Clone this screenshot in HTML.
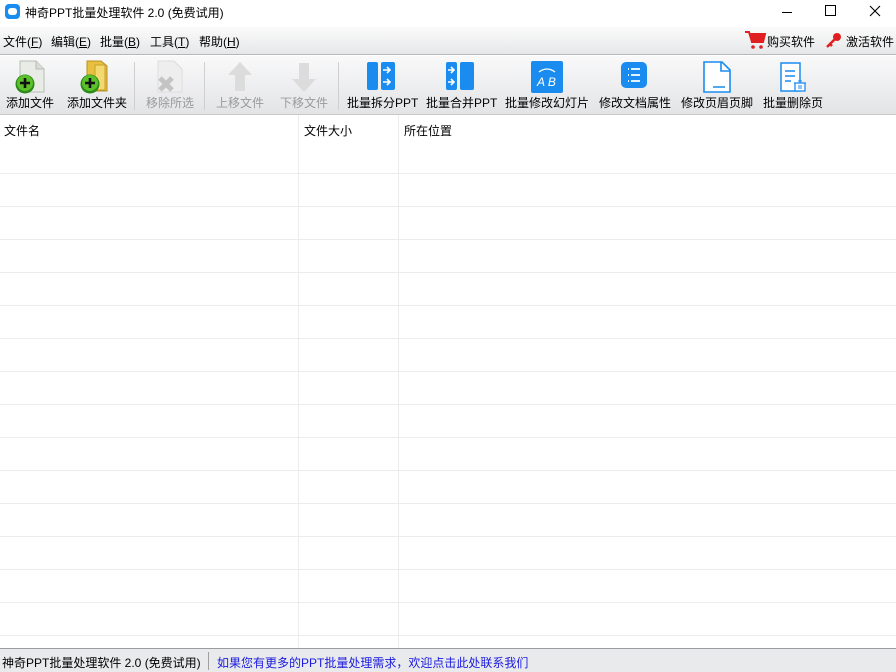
<!DOCTYPE html>
<html><head><meta charset="utf-8"><style>
*{margin:0;padding:0;box-sizing:border-box}
body{width:896px;height:672px;overflow:hidden;background:#fff;font-family:"Liberation Sans","Noto Sans CJK SC",sans-serif;font-size:12px;color:#000;position:relative}
.abs{position:absolute}
#title{top:0;left:0;width:896px;height:27px;background:#fff}
#menu{top:27px;left:0;width:896px;height:28px;background:linear-gradient(#fbfbfb,#e6e7e9);border-bottom:1px solid #b8b8b8}
#tool{top:56px;left:0;width:896px;height:59px;background:linear-gradient(#f9f9fa,#e3e4e6);border-bottom:1px solid #c8c8c8}
.mi{top:6px;font-size:12px}
.tb{position:absolute;top:38px;font-size:12px;white-space:nowrap}
.gray{color:#9a9a9a}
.sep{position:absolute;top:6px;width:1px;height:48px;background:#cfcfcf}
.hl{position:absolute;left:0;width:896px;height:1px;background:#ececec}
.vl{position:absolute;top:115px;width:1px;height:533px;background:#ececec}
#status{top:648px;left:0;width:896px;height:24px;background:#e9eaec;border-top:1px solid #9a9ca0}
</style></head><body>
<div id="title" class="abs">
 <div class="abs" style="left:5px;top:4px;width:15px;height:15px;border-radius:4px;background:#1a8cf0"><div class="abs" style="left:3px;top:4px;width:9px;height:7px;border-radius:3px;background:#fff"></div></div>
 <div class="abs" style="left:25px;top:4px;font-size:12px">神奇PPT批量处理软件 2.0 (免费试用)</div>
 <div class="abs" style="left:782px;top:12px;width:10px;height:1px;background:#000"></div>
 <div class="abs" style="left:825px;top:5px;width:11px;height:11px;border:1px solid #000"></div>
 <svg class="abs" style="left:869px;top:5px" width="12" height="12"><path d="M1 1L11 11M11 1L1 11" stroke="#000" stroke-width="1.1"/></svg>
</div>
<div id="menu" class="abs">
 <span class="abs mi" style="left:3px">文件(<u>F</u>)</span>
 <span class="abs mi" style="left:51px">编辑(<u>E</u>)</span>
 <span class="abs mi" style="left:100px">批量(<u>B</u>)</span>
 <span class="abs mi" style="left:150px">工具(<u>T</u>)</span>
 <span class="abs mi" style="left:199px">帮助(<u>H</u>)</span>
 <svg class="abs" style="left:744px;top:3px" width="22" height="20"><path d="M1 2h4l3 10h11l2-8H6" fill="none" stroke="#e02020" stroke-width="2"/><rect x="7" y="5" width="13" height="6" fill="#e02020"/><circle cx="9" cy="17" r="1.8" fill="#e02020"/><circle cx="17" cy="17" r="1.8" fill="#e02020"/></svg>
 <span class="abs mi" style="left:767px">购买软件</span>
 <svg class="abs" style="left:825px;top:4px" width="18" height="18"><circle cx="12" cy="6" r="4" fill="#e02020"/><path d="M10 8L2 16M5 13l2 2" stroke="#e02020" stroke-width="2.5"/></svg>
 <span class="abs mi" style="left:846px">激活软件</span>
</div>
<div id="tool" class="abs">
 <svg class="abs" style="left:14px;top:3px" width="34" height="36"><path d="M6 2h16l8 8v23H6z" fill="#e8ebe6" stroke="#b8bcb6"/><path d="M22 2v8h8" fill="#d8dcd6" stroke="#b8bcb6"/><circle cx="11" cy="25" r="9.5" fill="#2b8a1a"/><circle cx="11" cy="24" r="8" fill="#5cc02a"/><path d="M11 19v10M6 24h10" stroke="#111" stroke-width="2.6"/></svg>
 <span class="tb" style="left:6px">添加文件</span>
 <svg class="abs" style="left:79px;top:3px" width="34" height="36"><path d="M8 2h14l6 5v25H8z" fill="#e8c040" stroke="#b89020"/><path d="M16 6h10v25H16z" fill="#f4d870" stroke="#c8a030"/><circle cx="11" cy="25" r="9.5" fill="#2b8a1a"/><circle cx="11" cy="24" r="8" fill="#5cc02a"/><path d="M11 19v10M6 24h10" stroke="#111" stroke-width="2.6"/></svg>
 <span class="tb" style="left:67px">添加文件夹</span>
 <div class="sep" style="left:134px"></div>
 <svg class="abs" style="left:152px;top:3px" width="34" height="36"><path d="M6 2h16l8 8v23H6z" fill="#eee" stroke="#ddd"/><path d="M8 19l12 12M20 19L8 31" stroke="#c4c4c4" stroke-width="5"/></svg>
 <span class="tb gray" style="left:146px">移除所选</span>
 <div class="sep" style="left:204px"></div>
 <svg class="abs" style="left:226px;top:4px" width="28" height="34"><path d="M14 2L2 15h7v16h10V15h7z" fill="#dcdcdc"/></svg>
 <span class="tb gray" style="left:216px">上移文件</span>
 <svg class="abs" style="left:290px;top:4px" width="28" height="34"><path d="M14 32L2 19h7V3h10v16h7z" fill="#dcdcdc"/></svg>
 <span class="tb gray" style="left:280px">下移文件</span>
 <div class="sep" style="left:338px"></div>
 <svg class="abs" style="left:367px;top:6px" width="28" height="28"><rect x="0" y="0" width="11" height="28" rx="2" fill="#1a8cf0"/><rect x="14" y="0" width="14" height="28" rx="2" fill="#1a8cf0"/><path d="M16 8h7M20 5l3 3-3 3M16 20h7M20 17l3 3-3 3" stroke="#fff" stroke-width="1.6" fill="none"/></svg>
 <span class="tb" style="left:347px">批量拆分PPT</span>
 <svg class="abs" style="left:446px;top:6px" width="28" height="28"><rect x="0" y="0" width="11" height="28" rx="2" fill="#1a8cf0"/><rect x="14" y="0" width="14" height="28" rx="2" fill="#1a8cf0"/><path d="M2 8h6M5 5l3 3-3 3M2 20h6M5 17l3 3-3 3" stroke="#fff" stroke-width="1.6" fill="none"/></svg>
 <span class="tb" style="left:426px">批量合并PPT</span>
 <svg class="abs" style="left:531px;top:5px" width="32" height="32"><rect width="32" height="32" rx="2" fill="#1a8cf0"/><path d="M8 11q8-6 16 0" stroke="#fff" fill="none" stroke-width="1.3"/><text x="6" y="25" font-size="12" font-style="italic" fill="#fff" font-family="Liberation Sans">A B</text></svg>
 <span class="tb" style="left:505px">批量修改幻灯片</span>
 <svg class="abs" style="left:621px;top:6px" width="26" height="26"><rect width="26" height="26" rx="5" fill="#1a8cf0"/><path d="M7 7h1M7 13h1M7 19h1M10 7h9M10 13h9M10 19h9" stroke="#fff" stroke-width="1.8"/></svg>
 <span class="tb" style="left:599px">修改文档属性</span>
 <svg class="abs" style="left:703px;top:5px" width="28" height="32"><path d="M1 1h18l8 8v22H1z" fill="#fff" stroke="#1a8cf0" stroke-width="1.6"/><path d="M18 1v9h9M10 26h12" stroke="#1a8cf0" stroke-width="1.6" fill="none"/></svg>
 <span class="tb" style="left:681px">修改页眉页脚</span>
 <svg class="abs" style="left:780px;top:6px" width="28" height="30"><path d="M1 1h19v28H1z" fill="#fff" stroke="#1a8cf0" stroke-width="1.5"/><path d="M5 9h10M5 14h10M5 19h6" stroke="#1a8cf0" stroke-width="1.5"/><rect x="15" y="21" width="10" height="8" fill="#fff" stroke="#1a8cf0" stroke-width="1.3"/><path d="M14 21h12M18 19h4M19 23v4M21 23v4" stroke="#1a8cf0" stroke-width="1"/></svg>
 <span class="tb" style="left:763px">批量删除页</span>
</div>
<div class="abs" style="left:4px;top:122px">文件名</div>
<div class="abs" style="left:304px;top:122px">文件大小</div>
<div class="abs" style="left:404px;top:122px">所在位置</div>
<div class="vl" style="left:298px"></div>
<div class="vl" style="left:398px"></div>
<div class="hl" style="top:173px"></div><div class="hl" style="top:206px"></div><div class="hl" style="top:239px"></div><div class="hl" style="top:272px"></div><div class="hl" style="top:305px"></div><div class="hl" style="top:338px"></div><div class="hl" style="top:371px"></div><div class="hl" style="top:404px"></div><div class="hl" style="top:437px"></div><div class="hl" style="top:470px"></div><div class="hl" style="top:503px"></div><div class="hl" style="top:536px"></div><div class="hl" style="top:569px"></div><div class="hl" style="top:602px"></div><div class="hl" style="top:635px"></div>
<div id="status" class="abs">
 <span class="abs" style="left:2px;top:5px">神奇PPT批量处理软件 2.0 (免费试用)</span>
 <div class="abs" style="left:208px;top:3px;width:1px;height:18px;background:#a0a0a0"></div>
 <span class="abs" style="left:217px;top:5px;color:#1a1ae0">如果您有更多的PPT批量处理需求，欢迎点击此处联系我们</span>
</div>
</body></html>
